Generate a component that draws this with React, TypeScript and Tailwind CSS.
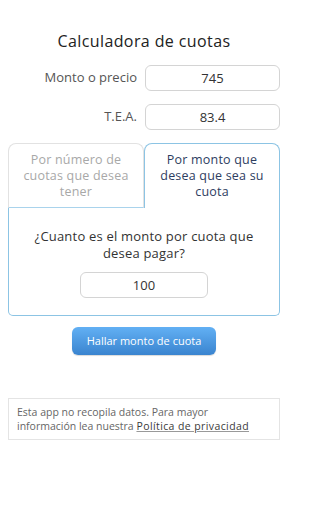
import { useState } from "react";

export default function App() {
  const [monto, setMonto] = useState("745");
  const [tea, setTea] = useState("83.4");
  const [cuota, setCuota] = useState("100");
  const [tab, setTab] = useState<"numero" | "monto">("monto");

  const inputCls =
    "h-[26px] w-full rounded-[6px] border border-[#d4d4d4] bg-white text-center text-[13px] text-[#333] outline-none";

  const tabCls = (active: boolean) =>
    active
      ? "h-[65px] w-1/2 rounded-t-[8px] border border-b-0 border-[#8cc4e4] bg-white text-[12.5px] leading-[16px] tracking-[0.2px] text-[#2e3d5f]"
      : "h-[65px] w-1/2 rounded-t-[8px] border border-[#e2e2e2] border-b-[#a9d3ec] bg-white text-[12.5px] leading-[16px] tracking-[0.2px] text-[#a8a8a8]";

  return (
    <div className="min-h-[512px] w-[288px] bg-white px-2 pt-[30px] font-['Open_Sans',sans-serif] text-[#333]">
      <h1 className="text-center text-[16px] leading-[22px] tracking-[0.4px] text-[#222]">Calculadora de cuotas</h1>

      <div className="mt-[13px] grid grid-cols-[129px_135px] items-center gap-x-[8px] gap-y-[13px]">
        <label className="text-right text-[13px] text-[#555]">Monto o precio</label>
        <input className={inputCls} value={monto} onChange={(e) => setMonto(e.target.value)} />
        <label className="text-right text-[13px] text-[#555]">T.E.A.</label>
        <input className={inputCls} value={tea} onChange={(e) => setTea(e.target.value)} />
      </div>

      <div className="mt-[13px]">
        <div className="flex">
          <button onClick={() => setTab("numero")} className={tabCls(tab === "numero")}>
            Por número de
            <br />
            cuotas que desea
            <br />
            tener
          </button>
          <button onClick={() => setTab("monto")} className={tabCls(tab === "monto")}>
            Por monto que
            <br />
            desea que sea su
            <br />
            cuota
          </button>
        </div>
        <div className="flex h-[108px] flex-col items-center rounded-b-[5px] border border-t-0 border-[#8cc4e4] pt-[20px]">
          <p className="text-center text-[13px] leading-[17px] tracking-[0.2px] text-[#333]">
            ¿Cuanto es el monto por cuota que
            <br />
            desea pagar?
          </p>
          <input
            className="mt-[10px] h-[26px] w-[128px] rounded-[6px] border border-[#d4d4d4] text-center text-[13px] text-[#333] outline-none"
            value={cuota}
            onChange={(e) => setCuota(e.target.value)}
          />
        </div>
      </div>

      <div className="mt-[11px] flex justify-center">
        <button className="h-[28px] w-[144px] rounded-[6px] bg-gradient-to-b from-[#62b0f4] to-[#3a84cf] text-[11px] text-white shadow-[0_1px_1px_rgba(0,0,0,0.15)]">
          Hallar monto de cuota
        </button>
      </div>

      <div className="mt-[43px] border border-[#e4e4e4] px-[8px] py-[6px] text-[10.5px] leading-[14px] text-[#666]">
        Esta app no recopila datos. Para mayor
        <br />
        información lea nuestra{" "}
        <a className="tracking-[0.4px] text-[#3a3a3a] underline decoration-[#999]">Política de privacidad</a>
      </div>
    </div>
  );
}
